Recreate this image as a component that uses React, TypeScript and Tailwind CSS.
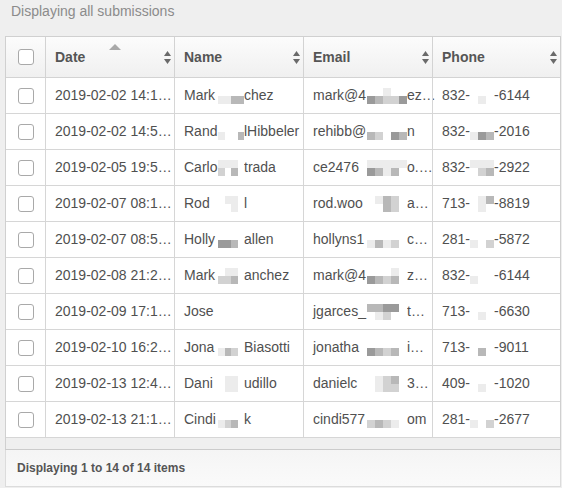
import React from "react";

type Mos = string[][]; // rows of square colours

const Mosaic = ({ w, pattern }: { w: number; pattern: Mos }) => {
  const cols = pattern[0].length;
  const sq = w / cols;
  return (
    <span className="relative z-[1] inline-flex flex-col align-middle bg-white" style={{ width: w }}>
      {pattern.map((row, i) => (
        <span key={i} className="flex">
          {row.map((c, j) => (
            <span key={j} style={{ width: sq, height: 8, background: c }} />
          ))}
        </span>
      ))}
    </span>
  );
};

const W = "#ffffff";
const L = "#ececec";
const M = "#d2d2d2";
const G = "#b8b8b8";
const D = "#9a9a9a";

type Row = {
  date: string;
  n: [string, string, Mos | null];
  e: [string, string, Mos];
  p: [string, string, Mos];
};

const rows: Row[] = [
  {
    date: "2019-02-02 14:1…",
    n: ["Mark", "chez", [[W, W, W, W], [L, L, G, G]]],
    e: ["mark@4", "ez…", [[W, W, L, W, W], [D, G, M, M, D]]],
    p: ["832-", "-6144", [[W, W, W], [W, L, W]]],
  },
  {
    date: "2019-02-02 14:5…",
    n: ["Rand", "lHibbeler", [[W, W, W, W], [L, W, W, G]]],
    e: ["rehibb@", "n", [[W, W, W, W, W], [G, M, W, D, G]]],
    p: ["832-", "-2016", [[W, W, W], [L, D, G]]],
  },
  {
    date: "2019-02-05 19:5…",
    n: ["Carlo", "trada", [[L, L, L, W], [M, W, G, W]]],
    e: ["ce2476", "o.…", [[L, L, L, L, L], [D, G, L, G, W]]],
    p: ["832-", "-2922", [[L, L, L], [W, M, G]]],
  },
  {
    date: "2019-02-07 08:1…",
    n: ["Rod", "l", [[W, L, L, W], [W, W, L, W]]],
    e: ["rod.woo", "a…", [[W, L, G, M, W], [W, W, G, M, W]]],
    p: ["713-", "-8819", [[W, L, G], [W, L, W]]],
  },
  {
    date: "2019-02-07 08:5…",
    n: ["Holly", "allen", [[W, W, W, W], [D, D, G, W]]],
    e: ["hollyns1", "c…", [[W, W, W, W, W], [L, G, L, M, W]]],
    p: ["281-", "-5872", [[W, W, W], [L, W, M]]],
  },
  {
    date: "2019-02-08 21:2…",
    n: ["Mark", "anchez", [[W, L, L, W], [M, M, G, W]]],
    e: ["mark@4", "z…", [[W, W, W, L, W], [D, G, M, G, W]]],
    p: ["832-", "-6144", [[W, W, W], [L, W, W]]],
  },
  {
    date: "2019-02-09 17:1…",
    n: ["Jose", "", null],
    e: ["jgarces_", "t…", [[G, G, D, D, W], [W, L, M, W, W]]],
    p: ["713-", "-6630", [[W, W, W], [W, L, W]]],
  },
  {
    date: "2019-02-10 16:2…",
    n: ["Jona", "Biasotti", [[W, W, W, W], [L, G, M, W]]],
    e: ["jonatha", "i…", [[W, W, W, W, W], [D, G, M, G, W]]],
    p: ["713-", "-9011", [[W, W, W], [W, G, W]]],
  },
  {
    date: "2019-02-13 12:4…",
    n: ["Dani", "udillo", [[W, L, L, W], [W, L, L, W]]],
    e: ["danielc", "3…", [[W, L, M, G, W], [W, L, M, M, W]]],
    p: ["409-", "-1020", [[W, W, W], [W, L, W]]],
  },
  {
    date: "2019-02-13 21:1…",
    n: ["Cindi", "k", [[W, W, W, W], [L, M, G, W]]],
    e: ["cindi577", "om", [[W, W, W, W, W], [M, G, M, L, W]]],
    p: ["281-", "-2677", [[W, W, W], [L, W, M]]],
  },
];

const SortIcon = () => (
  <svg width="7" height="13" viewBox="0 0 7 13" className="shrink-0">
    <polygon points="0,5 3.5,0 7,5" fill="#6a6a6a" />
    <polygon points="0,8 7,8 3.5,13" fill="#6a6a6a" />
  </svg>
);

const Checkbox = () => (
  <div className="w-[16px] h-[16px] rounded-[3px] border border-[#a9a9a9] bg-white" />
);

const HeaderCell = ({ label, w, sorted }: { label: string; w: string; sorted?: boolean }) => (
  <div className={`${w} relative flex items-center justify-between pl-[9px] pr-[3px] border-l border-[#d3d3d3]`}>
    {sorted && (
      <svg width="12" height="6" viewBox="0 0 12 6" className="absolute left-[63px] top-[7px]">
        <polygon points="0,6 6,0 12,6" fill="#a9a9a9" />
      </svg>
    )}
    <span className="font-bold text-[14px] text-[#555555] pt-[1px]">{label}</span>
    <SortIcon />
  </div>
);

const Split = ({ pre, preW, suf, mos, mosW }: { pre: string; preW: number; suf: string; mos: Mos | null; mosW: number }) => (
  <span className="flex items-center whitespace-nowrap">
    {mos ? (
      <>
        <span className="inline-block whitespace-pre" style={{ width: preW }}>
          {pre}
        </span>
        <Mosaic w={mosW} pattern={mos} />
        <span className="whitespace-pre">{suf}</span>
      </>
    ) : (
      <span>{pre}</span>
    )}
  </span>
);

export default function App() {
  return (
    <div className="w-[562px] h-[488px] bg-[#efefef] overflow-hidden font-['Liberation_Sans',Arial,sans-serif]">
      <div className="h-[36px] pl-[11px] pt-[2px] text-[14px] leading-[18px] text-[#8b8b8b]">
        Displaying all submissions
      </div>
      <div className="ml-[5px] w-[556px] border border-[#d0d0d0] border-b-[#cbcbcb] bg-[#efefef]">
        <div className="flex h-[41px] border-b border-[#d3d3d3] bg-linear-to-b from-[#fcfcfc] to-[#f0f0f0]">
          <div className="w-[39px] flex items-center justify-center">
            <Checkbox />
          </div>
          <HeaderCell label="Date" w="w-[129px]" sorted />
          <HeaderCell label="Name" w="w-[129px]" />
          <HeaderCell label="Email" w="w-[129px]" />
          <HeaderCell label="Phone" w="w-[128px]" />
        </div>
        {rows.map((r, i) => (
          <div key={i} className="flex h-[36px] border-b border-[#d6d6d6] bg-white text-[14px] text-[#505050]">
            <div className="w-[39px] flex items-center justify-center">
              <Checkbox />
            </div>
            <div className="w-[129px] flex items-center pl-[9px] border-l border-[#d6d6d6] whitespace-nowrap">
              {r.date}
            </div>
            <div className="w-[129px] flex items-center pl-[9px] border-l border-[#d6d6d6]">
              <Split pre={r.n[0]} preW={34} suf={r.n[1]} mos={r.n[2]} mosW={26} />
            </div>
            <div className="w-[129px] flex items-center pl-[9px] border-l border-[#d6d6d6]">
              <Split pre={r.e[0]} preW={54} suf={r.e[1]} mos={r.e[2]} mosW={40} />
            </div>
            <div className="w-[128px] flex items-center pl-[9px] border-l border-[#d6d6d6]">
              <Split pre={r.p[0]} preW={28} suf={r.p[1]} mos={r.p[2]} mosW={24} />
            </div>
          </div>
        ))}
        <div className="h-[11px]" />
      </div>
      <div className="ml-[5px] w-[556px] h-[37px] border-l border-r border-b border-[#dcdcdc] bg-linear-to-b from-[#f5f5f5] to-[#fafafa] flex items-center pl-[11px]">
        <span className="text-[12px] font-bold text-[#555555]">Displaying 1 to 14 of 14 items</span>
      </div>
    </div>
  );
}
